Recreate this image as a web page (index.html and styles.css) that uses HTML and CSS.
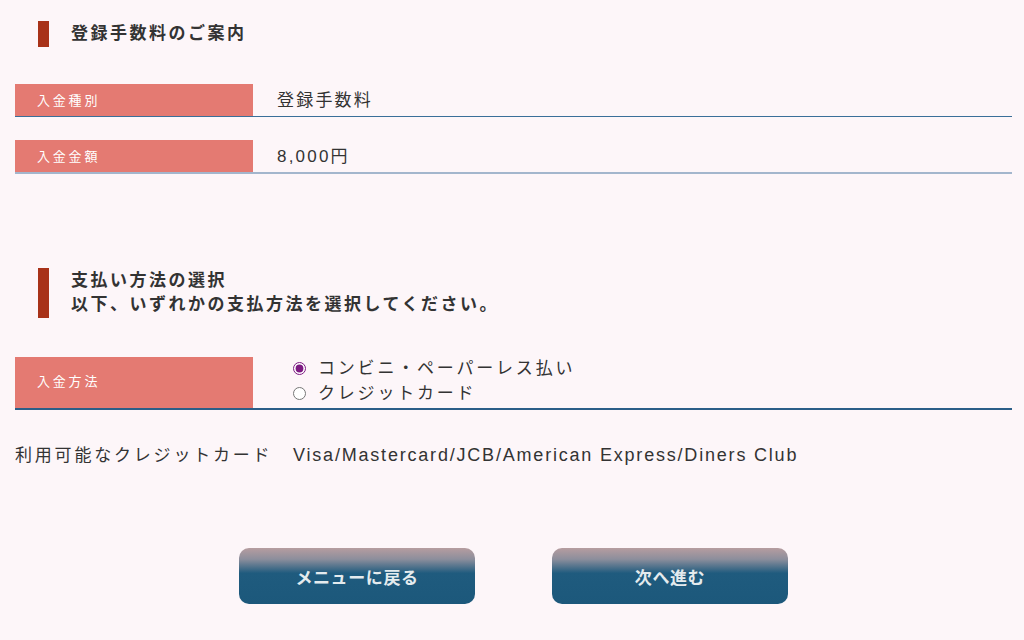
FILE: index.html
```html
<!DOCTYPE html>
<html lang="ja">
<head>
  <meta charset="UTF-8">
  <title>登録手数料のご案内</title>
  <link rel="stylesheet" href="styles.css">
</head>
<body>
  <div class="page">
    <h2 class="heading heading-first">登録手数料のご案内</h2>

    <div class="row">
      <div class="label">入金種別</div>
      <div class="value">登録手数料</div>
    </div>
    <div class="row row-light">
      <div class="label">入金金額</div>
      <div class="value">8,000円</div>
    </div>

    <h2 class="heading heading-second">支払い方法の選択<br>以下、いずれかの支払方法を選択してください。</h2>

    <div class="row row-tall">
      <div class="label">入金方法</div>
      <div class="choices">
        <label class="choice"><input type="radio" name="pay" checked> コンビニ・ペーパーレス払い</label>
        <label class="choice"><input type="radio" name="pay"> クレジットカード</label>
      </div>
    </div>

    <p class="cards"><span class="cards-title">利用可能なクレジットカード</span><span class="cards-list">Visa/Mastercard/JCB/American Express/Diners Club</span></p>

    <div class="controls">
      <button class="btn">メニューに戻る</button>
      <button class="btn">次へ進む</button>
    </div>
  </div>
</body>
</html>
```

FILE: styles.css
```css
body {
  margin: 0;
  background: #fdf6f9;
  font-family: "Liberation Sans", "Noto Sans CJK JP", sans-serif;
  color: #333;
}
.page {
  padding: 21px 12px 0 15px;
}
.heading {
  margin: 0 0 0 23px;
  border-left: 11px solid #a83219;
  padding-left: 22px;
  font-size: 17px;
  font-weight: bold;
  letter-spacing: 2.5px;
  line-height: 26px;
  color: #333;
}
.heading-second {
  margin-top: 94px;
  line-height: 24px;
  padding-top: 1px;
  padding-bottom: 1px;
}
.row {
  display: flex;
  align-items: center;
  height: 32px;
  border-bottom: 1px solid #3a6f99;
  margin-top: 23px;
}
.heading-first + .row {
  margin-top: 37px;
}
.row-light {
  border-bottom: 2px solid #a3b6cd;
}
.label {
  width: 238px;
  height: 100%;
  display: flex;
  align-items: center;
  padding: 0 0 2px 22px;
  box-sizing: border-box;
  background: #e47a72;
  color: #fff;
  font-size: 13px;
  letter-spacing: 2.8px;
}
.value {
  padding-left: 24px;
  font-size: 17px;
  letter-spacing: 2.2px;
  margin-top: -3px;
}
.row-tall {
  height: 51px;
  margin-top: 39px;
  border-bottom: 2px solid #2b5e88;
}
.row-tall .label {
  padding-bottom: 4px;
}
.choices {
  padding-left: 40px;
  margin-top: -4px;
  display: flex;
  flex-direction: column;
}
.choice {
  display: flex;
  align-items: center;
  font-size: 17px;
  line-height: 25px;
  letter-spacing: 2.8px;
}
.choice input {
  width: 13px;
  height: 13px;
  margin: 0 12px 0 0;
  accent-color: #7d1a82;
}
.cards {
  margin: 33px 0 0;
  font-size: 17px;
  line-height: 24px;
  letter-spacing: 2.8px;
}
.cards-title {
  display: inline-block;
  width: 278px;
}
.cards-list {
  font-size: 18px;
  letter-spacing: 1.8px;
}
.controls {
  display: flex;
  justify-content: center;
  gap: 77px;
  margin-top: 80px;
}
.btn {
  width: 236px;
  height: 56px;
  border: none;
  border-radius: 10px;
  background: linear-gradient(#b69da0 0%, #8c8e9c 20%, #1f5b7e 45%, #1c587b 100%);
  color: #e4ebee;
  font-family: "Noto Sans CJK JP", sans-serif;
  font-size: 17px;
  font-weight: bold;
  letter-spacing: 0.6px;
}
```
